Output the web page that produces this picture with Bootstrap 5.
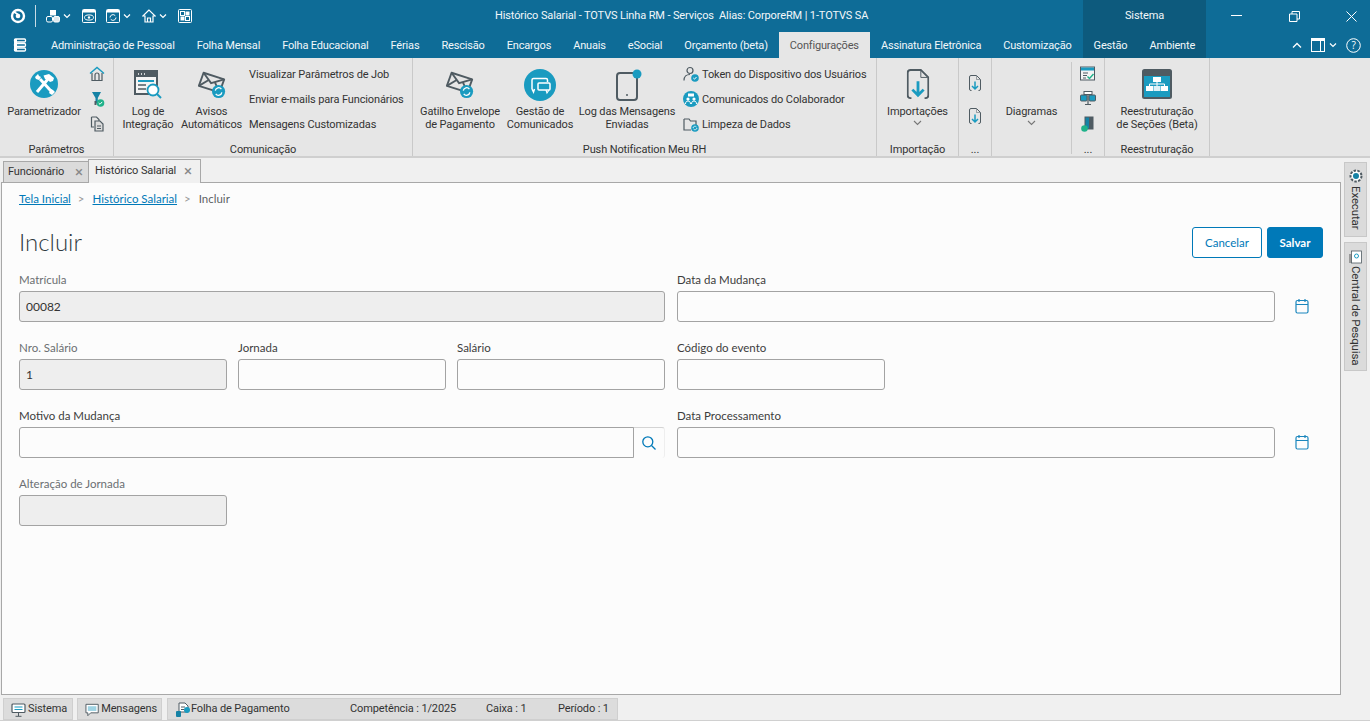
<!DOCTYPE html>
<html lang="pt-BR">
<head>
<meta charset="utf-8">
<title>Histórico Salarial</title>
<link href="https://cdn.jsdelivr.net/npm/bootstrap@5.3.0/dist/css/bootstrap.min.css" rel="stylesheet">
<style>
html,body{height:721px;overflow:hidden;margin:0;background:#f0f0f0}
body{font-family:Roboto,"Open Sans","Liberation Sans",sans-serif;font-size:11px;color:#333;width:1370px;letter-spacing:-.125px}
.shell{height:721px}
.headwrap{background:#0e6c97;height:58px;color:#f2f7fa}
.titlerow{height:32px}
.qat-in{width:300px;padding-left:10px;flex:none}
.qat-sep{width:1px;height:22px;background:#c8dbe5;margin:0 10px 0 9px}
.qat-ic{margin-right:7px}
.qat-ic2{margin-right:10px}
.qat-chev{margin-left:-4px;margin-right:11px}
.wintitle{width:783px;text-align:left;padding:1px 0 0 195px;white-space:nowrap;font-size:11px}
.sysblock{width:123px;height:32px;background:#0d5a7d;font-size:11px;padding-top:1px}
.winbtns{width:164px;padding:0 13px 0 25px}
.menurow{height:26px;font-size:11px;white-space:nowrap;letter-spacing:-.17px}
.menu-burger{width:40px;padding-left:13px}
.menu-it{padding:2px 11px 0;height:26px;display:flex;align-items:center}
.menu-act{background:#e6e6e6;color:#555}
.menu-dark{background:#0d5a7d;height:26px}
.menu-spacer{flex:1}
.menu-right{gap:9px;padding-right:9px}
.ribbon{height:100px;background:#e6e6e6;border-bottom:2px solid #cfcfcf}
.rgrp{border-right:1px solid #c9c9c9;height:98px;display:flex;flex-direction:column;flex:none}
.rbody{height:84px;display:flex;position:relative}
.rcap{height:14px;padding-top:1px;line-height:14px;text-align:center;font-size:11px;color:#333;white-space:nowrap}
.w1{width:114px}.w2{width:299px}.w3{width:464px}.w4{width:82px}.w5{width:33px}.w6{width:79px}.w7{width:33px}.w8{width:105px}
.rlg{display:flex;flex-direction:column;align-items:center;padding-top:11px;line-height:13px;text-align:center;white-space:nowrap;flex:none}
.rlg svg{margin-bottom:6px}
.rlg svg.tall{margin-bottom:4px}
.rlg svg.chv{margin:2px 0 0}
.rsm{display:flex;flex-direction:column;padding-top:4px;white-space:nowrap}
.rsm>div{height:25px;display:flex;align-items:center;gap:3px;padding-top:2px}
.rsm>div svg{margin-top:-4px}
.vline{border-left:1px solid #c9c9c9;height:92px;margin-top:4px;width:1px;flex:none}
.tabstrip{height:24px;background:#f0f0f0;padding:0 0 0 3px;align-items:flex-end}
.tb1{height:21px;width:86px;background:#dbdbdb;border:1px solid #a8a8a8;border-bottom:0;padding:1px 5px 0 4px}
.tb2{height:24px;width:113px;background:#f0f0f0;border:1px solid #a8a8a8;border-bottom:0;padding:0 8px 0 6px;margin-left:-1px;position:relative;z-index:2;margin-bottom:-1px}
.tabx{color:#888;font-size:15px;line-height:1}
.midrow{height:513px}
.panel{width:1340px;margin-left:1px;height:513px;background:#fcfcfc;border:1px solid #a8a8a8;padding:0 17px;font-family:Lato,"Open Sans",sans-serif;font-size:11.500px;color:#444;flex:none;letter-spacing:0}
.panel .breadcrumb{--bs-breadcrumb-divider:'>';margin:0;padding-top:8px;height:42px;font-size:11.500px;line-height:15px}
.panel .breadcrumb a{color:#0079b8}
.panel .breadcrumb-item+.breadcrumb-item{padding-left:7px}
.panel .breadcrumb-item+.breadcrumb-item::before{padding-right:8px;color:#999}
.pagehead{height:35px;align-items:center;margin-bottom:11px}
.pagetitle{font-size:24px;font-weight:300;color:#2f3a40;margin:-2px 0 0;line-height:32px}
.btn-cx{--bs-btn-font-size:11.500px;height:31px;border-radius:3px;padding:0}
.bc{width:70px;color:#0079b8;border-color:#0079b8;background:#fff;margin-right:5px}
.bs{width:56px;background:#0079b8;border-color:#0079b8;color:#fff;font-weight:700}
.frow{--bs-gutter-x:12px;height:68px}
.flab{display:block;height:20px;line-height:17px;margin:0;color:#3d3d3d;font-size:11.500px}
.flab.off{color:#6b6f72}
.frow .form-control{height:31px;border-radius:3px;border:1px solid #a3a3a3;background:#fcfcfc;font-size:12px;padding:0 6px;color:#333;box-shadow:none}
.frow .form-control[readonly]{background:#eeeeee}
.w208{width:208px;flex:none}
.calslot{width:48px;flex:none;display:flex;justify-content:center;padding:0 0 2px 5px}
.srchbtn{width:32px;border:0;border-top:1px solid #d4d4d4;border-right:1px solid #eee;background:#fcfcfc;padding:0;display:flex;align-items:center;justify-content:center;border-radius:0 3px 3px 0}
.frow .input-group .form-control{border-radius:3px 0 0 3px}
.sidebar{width:28px;padding-left:3px;margin-top:-20px;position:relative;z-index:3;gap:5px}
.stab{width:23px;background:#dbdbdb;border:1px solid #c8c8c8;writing-mode:vertical-rl;font-size:11.500px;display:flex;align-items:center;white-space:nowrap;color:#333;gap:2px;line-height:22px}
.st1{height:75px;padding-top:5px}.st2{height:129px;padding-top:7px}
.stab svg{flex:none}
.statusbar{height:26px;padding:3px 0 0 3px;gap:4px;background:#f0f0f0;border-bottom:1px solid #d0d0d0}
.sitem{background:#dcdcdc;border:1px solid #cfcfcf;height:22px;padding:1px 4px 0 7px;display:flex;align-items:center;gap:2px;white-space:nowrap;font-size:11px}
.s1{width:70px}.s2{width:85px}.s3{width:451px;margin-left:1px;gap:0}
</style>
</head>
<body>
<svg width="0" height="0" class="d-none">
<symbol id="env" viewBox="0 0 32 32"><g fill="none" stroke="#4f5b62" stroke-width="2"><path d="M7 4 29 11 24 25 2 18z" stroke-linejoin="round"/><path d="M7 4 15 15 29 11M2 18 12 12M24 25 19 14"/></g><circle cx="23" cy="24" r="7" fill="#1a9bc0"/><path d="M19.500 23a3.600 3.600 0 0 1 6.500-1.500M26.500 25a3.600 3.600 0 0 1-6.500 1.500" fill="none" stroke="#fff" stroke-width="1.400"/></symbol>
<symbol id="doc" viewBox="0 0 24 32"><path d="M5 31H4a3 3 0 0 1-3-3V4a3 3 0 0 1 3-3h11l8 8v19a3 3 0 0 1-3 3h-1" fill="none" stroke="#4f5b62" stroke-width="2"/><path d="M15 2v7h7" fill="none" stroke="#4f5b62" stroke-width="1"/><path d="M12 13v15M6 22l6 6 6-6" fill="none" stroke="#1a9bc0" stroke-width="3"/></symbol>
<symbol id="cal" viewBox="0 0 14 16"><path d="M1 4a1.500 1.500 0 0 1 1.500-1.500h9A1.500 1.500 0 0 1 13 4v9.500a1.500 1.500 0 0 1-1.500 1.500h-9A1.500 1.500 0 0 1 1 13.500zM1 6.500h12M4 1v3M10 1v3" fill="none" stroke="#1a86bd" stroke-width="1.200"/></symbol>
</svg>

<div class="shell d-flex flex-column">
  <div class="headwrap">
    <div class="titlerow d-flex align-items-center">
      <div class="qat-in d-flex align-items-center">
        <svg width="16" height="16" viewBox="0 0 16 16"><circle cx="8" cy="8" r="6" fill="none" stroke="#fff" stroke-width="2.400"/><circle cx="8" cy="8" r="2.300" fill="#fff"/><path d="M4 4l5 3" stroke="#fff" stroke-width="1.500"/></svg>
        <span class="qat-sep"></span>
        <svg class="qat-ic" width="14" height="14" viewBox="0 0 14 14"><rect x="4" y="1" width="6" height="5.500" fill="#fff"/><rect x=".5" y="7.500" width="6" height="5.500" rx="1.500" fill="none" stroke="#fff"/><rect x="7.500" y="7.500" width="6" height="5.500" rx="1.500" fill="#dfe9ee" stroke="#fff"/></svg>
        <svg class="qat-chev" width="8" height="6" viewBox="0 0 8 6"><path d="M1 1.500 4 4.500 7 1.500" fill="none" stroke="#fff" stroke-width="1.200"/></svg>
        <svg class="qat-ic2" width="14" height="14" viewBox="0 0 14 14"><rect x=".5" y=".5" width="13" height="13" rx="1" fill="none" stroke="#fff"/><rect x="1" y="1" width="12" height="2.500" fill="#fff"/><ellipse cx="7" cy="8.500" rx="4.500" ry="2.600" fill="none" stroke="#fff"/><circle cx="7" cy="8.500" r="1.200" fill="#fff"/></svg>
        <svg class="qat-ic" width="14" height="14" viewBox="0 0 14 14"><rect x=".5" y=".5" width="13" height="13" rx="1" fill="none" stroke="#fff"/><rect x="1" y="1" width="12" height="2.500" fill="#fff"/><path d="M4 8.500a3 3 0 0 1 5.300-1.800M10 8.500a3 3 0 0 1-5.300 1.800" fill="none" stroke="#fff"/></svg>
        <svg class="qat-chev" width="8" height="6" viewBox="0 0 8 6"><path d="M1 1.500 4 4.500 7 1.500" fill="none" stroke="#fff" stroke-width="1.200"/></svg>
        <svg class="qat-ic" width="14" height="14" viewBox="0 0 14 14"><path d="M7 1 .8 7H3v6h8V7h2.200zM5.500 13V9h3v4" fill="none" stroke="#fff" stroke-width="1.200"/></svg>
        <svg class="qat-chev" width="8" height="6" viewBox="0 0 8 6"><path d="M1 1.500 4 4.500 7 1.500" fill="none" stroke="#fff" stroke-width="1.200"/></svg>
        <svg class="qat-ic" width="14" height="14" viewBox="0 0 14 14"><rect x=".5" y=".5" width="13" height="13" rx="1" fill="none" stroke="#fff"/><rect x="2.500" y="2.500" width="4" height="4" fill="none" stroke="#fff"/><rect x="7.500" y="2.500" width="4" height="4" fill="#fff"/><rect x="2.500" y="7.500" width="4" height="4" fill="#fff"/><rect x="7.500" y="7.500" width="4" height="4" fill="none" stroke="#fff"/></svg>
      </div>
      <div class="wintitle">Histórico Salarial - TOTVS Linha RM - Serviços&nbsp; Alias: CorporeRM | 1-TOTVS SA</div>
      <div class="sysblock d-flex align-items-center justify-content-center flex-none">Sistema</div>
      <div class="winbtns d-flex align-items-center justify-content-between">
        <svg width="11" height="2" viewBox="0 0 11 2"><rect width="11" height="1" fill="#fff"/></svg>
        <svg width="11" height="11" viewBox="0 0 11 11"><path d="M.5 3h7.500v7.500H.5zM3 3V.5h7.500V8H8" fill="none" stroke="#fff"/></svg>
        <svg width="11" height="11" viewBox="0 0 11 11"><path d="M.5.500l10 10M10.500.500l-10 10" stroke="#fff"/></svg>
      </div>
    </div>
    <div class="menurow d-flex align-items-center">
      <div class="menu-burger d-flex"><svg width="14" height="14" viewBox="0 0 14 14"><rect x="1.500" y="1" width="11" height="3" rx="1" fill="none" stroke="#fff" stroke-width="1.300"/><rect x="1.500" y="5.500" width="11" height="3" rx="1" fill="none" stroke="#fff" stroke-width="1.300"/><rect x="1.500" y="10" width="11" height="3" rx="1" fill="none" stroke="#fff" stroke-width="1.300"/><rect x="1" y="1" width="3" height="12" fill="#fff"/></svg></div>
      <div class="menu-it">Administração de Pessoal</div>
      <div class="menu-it">Folha Mensal</div>
      <div class="menu-it">Folha Educacional</div>
      <div class="menu-it">Férias</div>
      <div class="menu-it">Rescisão</div>
      <div class="menu-it">Encargos</div>
      <div class="menu-it">Anuais</div>
      <div class="menu-it">eSocial</div>
      <div class="menu-it">Orçamento (beta)</div>
      <div class="menu-it menu-act">Configurações</div>
      <div class="menu-it">Assinatura Eletrônica</div>
      <div class="menu-it">Customização</div>
      <div class="menu-dark d-flex">
        <div class="menu-it">Gestão</div>
        <div class="menu-it">Ambiente</div>
      </div>
      <div class="menu-spacer"></div>
      <div class="menu-right d-flex align-items-center">
        <svg width="10" height="7" viewBox="0 0 10 7"><path d="M1 5.500 5 1.500 9 5.500" fill="none" stroke="#fff" stroke-width="1.300"/></svg>
        <span class="d-flex align-items-center gap-1"><svg width="14" height="14" viewBox="0 0 14 14"><rect x=".5" y=".5" width="13" height="13" fill="none" stroke="#fff"/><rect x="1" y="1" width="12" height="2" fill="#fff"/><path d="M9.500 1v12" stroke="#fff"/></svg><svg width="8" height="6" viewBox="0 0 8 6"><path d="M1 1.500 4 4.500 7 1.500" fill="none" stroke="#fff" stroke-width="1.200"/></svg></span>
        <svg width="15" height="15" viewBox="0 0 15 15"><circle cx="7.500" cy="7.500" r="6.800" fill="none" stroke="#fff"/><text x="7.500" y="11" text-anchor="middle" fill="#fff" font-size="10" font-family="Open Sans">?</text></svg>
      </div>
    </div>
  </div>

  <div class="ribbon d-flex">
    <div class="rgrp w1">
      <div class="rbody">
        <div class="rlg" style="width:88px">
          <svg width="30" height="30" viewBox="0 0 30 30"><circle cx="15" cy="15" r="14" fill="#1a9bc0"/><path d="M19 10 8 23" stroke="#fff" stroke-width="3"/><path d="M14.500 6.500 20 5l5 4-1 3-3 1-2-2-3-1z" fill="#fff"/><path d="M11 10 22 22" stroke="#fff" stroke-width="3"/><path d="M6 8l3-3 1 2 2 1-2 3-3-1zM20 24l3 2 3-3-2-2-2-1z" fill="#fff"/></svg>
          <span>Parametrizador</span>
        </div>
        <div class="rsm" style="padding-left:1px">
          <div><svg width="16" height="16" viewBox="0 0 16 16"><path d="M1 7.500 8 1.500l7 6" fill="none" stroke="#1a9bc0" stroke-width="1.400"/><path d="M3 7v7.500h10V7M6 14.500V9a2 2 0 0 1 4 0v5.500" fill="none" stroke="#4f5b62" stroke-width="1.200"/></svg></div>
          <div><svg width="16" height="16" viewBox="0 0 16 16"><path d="M3 1h9L8.800 7v6L6.500 12V7z" fill="#1582a5"/><path d="M6.500 10v4" stroke="#4f5b62" stroke-width="2"/><circle cx="11.500" cy="12" r="3.800" fill="#1fb28a"/><path d="M9.700 12l1.300 1.300 2.200-2.400" fill="none" stroke="#fff"/></svg></div>
          <div><svg width="16" height="16" viewBox="0 0 16 16"><path d="M2.500 1h5l2.500 2.500V5M2.500 1v10H5" fill="none" stroke="#4f5b62" stroke-width="1.200"/><path d="M6 5h5l3 3v7H6z" fill="#dcdcdc" stroke="#4f5b62" stroke-width="1.200"/><path d="M8 10h4M8 12.500h4" stroke="#4f5b62"/></svg></div>
        </div>
      </div>
      <div class="rcap">Parâmetros</div>
    </div>
    <div class="rgrp w2">
      <div class="rbody">
        <div class="rlg" style="width:62px;margin-left:3px">
          <svg width="32" height="30" viewBox="0 0 32 30"><rect x="3" y="2" width="22" height="23" fill="#f4f4f4" stroke="#4f5b62" stroke-width="2"/><rect x="3" y="2" width="22" height="6" fill="#4f5b62"/><path d="M6 5h1M9 5h1M12 5h1" stroke="#fff" stroke-width="1.500"/><path d="M6 12h16" stroke="#1a9bc0" stroke-width="2"/><path d="M6 16h8M6 20h8" stroke="#4f5b62" stroke-width="1.500"/><circle cx="21" cy="21" r="5.500" fill="#fff" stroke="#1a9bc0" stroke-width="1.800"/><path d="M25 25l4 4" stroke="#1a9bc0" stroke-width="2"/></svg>
          <span>Log de<br>Integração</span>
        </div>
        <div class="rlg" style="width:65px">
          <svg width="32" height="30" viewBox="0 0 32 30"><use href="#env"/></svg>
          <span>Avisos<br>Automáticos</span>
        </div>
        <div class="rsm" style="padding-left:5px">
          <div>Visualizar Parâmetros de Job</div>
          <div>Enviar e-mails para Funcionários</div>
          <div>Mensagens Customizadas</div>
        </div>
      </div>
      <div class="rcap">Comunicação</div>
    </div>
    <div class="rgrp w3">
      <div class="rbody">
        <div class="rlg" style="width:86px;margin-left:4px">
          <svg width="32" height="30" viewBox="0 0 32 30"><use href="#env"/></svg>
          <span>Gatilho Envelope<br>de Pagamento</span>
        </div>
        <div class="rlg" style="width:74px">
          <svg class="tall" width="32" height="32" viewBox="0 0 32 32"><circle cx="16" cy="16" r="16" fill="#1a9bc0"/><path d="M8 20v-9a1.500 1.500 0 0 1 1.500-1.500H22a1.500 1.500 0 0 1 1.500 1.500v2M8 20l1.500 3 1-3" fill="none" stroke="#fff" stroke-width="1.500"/><rect x="14" y="14" width="12" height="7" rx="1" fill="#1a9bc0" stroke="#fff" stroke-width="1.500"/><path d="M22 21l1 3 2-3" fill="none" stroke="#fff" stroke-width="1.200"/></svg>
          <span>Gestão de<br>Comunicados</span>
        </div>
        <div class="rlg" style="width:100px">
          <svg class="tall" width="32" height="32" viewBox="0 0 32 32"><rect x="6" y="4" width="20" height="27" rx="3" fill="none" stroke="#4f5b62" stroke-width="2"/><circle cx="16" cy="26" r="1" fill="#4f5b62"/><circle cx="26" cy="5" r="4.500" fill="#1a9bc0"/></svg>
          <span>Log das Mensagens<br>Enviadas</span>
        </div>
        <div class="rsm" style="padding-left:6px">
          <div><svg width="16" height="16" viewBox="0 0 16 16"><circle cx="7" cy="4.500" r="3" fill="none" stroke="#4f5b62" stroke-width="1.200"/><path d="M1 14.500c0-4 2.500-6 6-6" fill="none" stroke="#4f5b62" stroke-width="1.200"/><circle cx="12" cy="12" r="3.800" fill="#1a9bc0"/><path d="M10.300 12l1.200 1.200 2-2.200" fill="none" stroke="#fff"/></svg>Token do Dispositivo dos Usuários</div>
          <div><svg width="16" height="16" viewBox="0 0 16 16"><circle cx="8" cy="8" r="8" fill="#1a9bc0"/><circle cx="5" cy="8" r="1.600" fill="#fff"/><circle cx="11" cy="8" r="1.600" fill="#fff"/><path d="M2.500 13c0-2 1-3 2.500-3s2.500 1 2.500 3M8.500 13c0-2 1-3 2.500-3s2.500 1 2.500 3" fill="none" stroke="#fff"/><rect x="5" y="2.500" width="6" height="3" fill="#fff"/></svg>Comunicados do Colaborador</div>
          <div><svg width="16" height="16" viewBox="0 0 16 16"><path d="M1 3h5l1.500 2H13v5M1 3v11h7" fill="none" stroke="#4f5b62" stroke-width="1.200"/><circle cx="12" cy="12" r="3.800" fill="#1a9bc0"/><path d="M10 12a2 2 0 0 1 3.500-1M14 12a2 2 0 0 1-3.500 1" fill="none" stroke="#fff" stroke-width=".8"/></svg>Limpeza de Dados</div>
        </div>
      </div>
      <div class="rcap">Push Notification Meu RH</div>
    </div>
    <div class="rgrp w4">
      <div class="rbody">
        <div class="rlg w-100">
          <svg width="24" height="30" viewBox="0 0 24 32"><use href="#doc"/></svg>
          <span>Importações</span>
          <svg class="chv" width="9" height="6" viewBox="0 0 9 6"><path d="M1 1l3.500 3.500L8 1" fill="none" stroke="#777" stroke-width="1.100"/></svg>
        </div>
      </div>
      <div class="rcap">Importação</div>
    </div>
    <div class="rgrp w5">
      <div class="rbody justify-content-center">
        <div class="d-flex flex-column align-items-center" style="padding-top:17px;gap:17px">
          <svg width="12" height="16" viewBox="0 0 24 32"><use href="#doc"/></svg>
          <svg width="12" height="16" viewBox="0 0 24 32"><use href="#doc"/></svg>
        </div>
      </div>
      <div class="rcap">...</div>
    </div>
    <div class="rgrp w6" style="border-right:0">
      <div class="rbody">
        <div class="rlg w-100" style="padding-top:47px">
          <span>Diagramas</span>
          <svg class="chv" width="9" height="6" viewBox="0 0 9 6"><path d="M1 1l3.500 3.500L8 1" fill="none" stroke="#777" stroke-width="1.100"/></svg>
        </div>
      </div>
    </div>
    <div class="vline"></div>
    <div class="rgrp w7">
      <div class="rbody justify-content-center">
        <div class="rsm">
          <div><svg width="15" height="15" viewBox="0 0 15 15"><rect x=".5" y="1" width="14" height="13" fill="#f4f4f4" stroke="#4f5b62"/><rect x="1" y="1.500" width="13" height="3" fill="#1a9bc0"/><path d="M3 7h5M3 9.500h4M3 12h3" stroke="#4f5b62"/><path d="M7.500 10.500l2 2 4-4.500" fill="none" stroke="#1fb28a" stroke-width="1.400"/></svg></div>
          <div><svg width="16" height="15" viewBox="0 0 16 15"><rect x="4" y=".5" width="8" height="3" fill="#fff" stroke="#4f5b62"/><rect x=".5" y="4" width="6.500" height="6" rx="1" fill="#1a9bc0" stroke="#4f5b62"/><rect x="9" y="4" width="6.500" height="6" rx="1" fill="#1a9bc0" stroke="#4f5b62"/><path d="M8 4v9M5 13.500h6" stroke="#4f5b62" stroke-width="1.200"/></svg></div>
          <div><svg width="15" height="16" viewBox="0 0 15 16"><rect x="5" y="1" width="8" height="12" fill="#1582a5" stroke="#4f5b62"/><rect x="9" y="1" width="4" height="12" fill="#4f5b62"/><circle cx="4.500" cy="12.500" r="3.300" fill="#1fb28a"/></svg></div>
        </div>
      </div>
      <div class="rcap">...</div>
    </div>
    <div class="rgrp w8">
      <div class="rbody">
        <div class="rlg w-100">
          <svg width="30" height="30" viewBox="0 0 30 30"><rect x="1" y="1" width="28" height="28" rx="1.500" fill="#1a9bc0" stroke="#4f5b62" stroke-width="2"/><rect x="2" y="2" width="26" height="5" fill="#4f5b62"/><rect x="11" y="8" width="8" height="5" fill="#fff"/><rect x="4" y="17" width="7" height="5" fill="#fff"/><rect x="19" y="17" width="7" height="5" fill="#fff"/><rect x="11.500" y="17" width="7" height="5" fill="#dff1f7"/><path d="M15 13v4M7.500 17v-2h15v2" fill="none" stroke="#fff"/></svg>
          <span>Reestruturação<br>de Seções (Beta)</span>
        </div>
      </div>
      <div class="rcap">Reestruturação</div>
    </div>
  </div>

  <div class="tabstrip d-flex">
    <div class="tb1 d-flex align-items-center justify-content-between"><span>Funcionário</span><span class="tabx">×</span></div>
    <div class="tb2 d-flex align-items-center justify-content-between"><span>Histórico Salarial</span><span class="tabx">×</span></div>
  </div>

  <div class="midrow d-flex">
    <main class="panel">
      <nav aria-label="breadcrumb">
        <ol class="breadcrumb">
          <li class="breadcrumb-item"><a href="#">Tela Inicial</a></li>
          <li class="breadcrumb-item"><a href="#">Histórico Salarial</a></li>
          <li class="breadcrumb-item active" aria-current="page">Incluir</li>
        </ol>
      </nav>
      <div class="pagehead d-flex justify-content-between">
        <h1 class="pagetitle">Incluir</h1>
        <div class="d-flex">
          <button type="button" class="btn btn-cx bc">Cancelar</button>
          <button type="button" class="btn btn-cx bs">Salvar</button>
        </div>
      </div>
      <div class="row frow">
        <div class="col-6"><label class="flab off">Matrícula</label><input class="form-control" readonly value="00082"></div>
        <div class="col-6"><label class="flab">Data da Mudança</label><div class="d-flex align-items-center"><input class="form-control"><span class="calslot"><svg width="14" height="16"><use href="#cal"/></svg></span></div></div>
      </div>
      <div class="row frow">
        <div class="col-6 d-flex justify-content-between">
          <div class="w208"><label class="flab off">Nro. Salário</label><input class="form-control" readonly value="1"></div>
          <div class="w208"><label class="flab">Jornada</label><input class="form-control"></div>
          <div class="w208"><label class="flab">Salário</label><input class="form-control"></div>
        </div>
        <div class="col-6"><div class="w208"><label class="flab">Código do evento</label><input class="form-control"></div></div>
      </div>
      <div class="row frow">
        <div class="col-6"><label class="flab">Motivo da Mudança</label><div class="input-group"><input class="form-control"><button type="button" class="srchbtn" aria-label="Buscar"><svg width="16" height="16" viewBox="0 0 16 16"><circle cx="6.800" cy="6.800" r="5" fill="none" stroke="#0079b8" stroke-width="1.300"/><path d="M10.500 10.500l4 4" stroke="#0079b8" stroke-width="1.300"/></svg></button></div></div>
        <div class="col-6"><label class="flab">Data Processamento</label><div class="d-flex align-items-center"><input class="form-control"><span class="calslot"><svg width="14" height="16"><use href="#cal"/></svg></span></div></div>
      </div>
      <div class="row frow">
        <div class="col-6"><div class="w208"><label class="flab off">Alteração de Jornada</label><input class="form-control" readonly></div></div>
      </div>
    </main>
    <aside class="sidebar d-flex flex-column">
      <div class="stab st1"><svg width="16" height="16" viewBox="0 0 16 16"><circle cx="8" cy="8" r="5.500" fill="#fff" stroke="#4f5b62" stroke-width="2" stroke-dasharray="2.500 1.300"/><circle cx="8" cy="8" r="3" fill="#1582a5"/></svg>Executar</div>
      <div class="stab st2"><svg width="14" height="14" viewBox="0 0 14 14"><rect x="0" y="4" width="3" height="9" fill="#9a9a9a"/><rect x="2.500" y="1" width="10" height="12" fill="#fff" stroke="#4f5b62" stroke-width=".8"/><circle cx="7.500" cy="6" r="2" fill="none" stroke="#1a9bc0"/></svg>Central de Pesquisa</div>
    </aside>
  </div>

  <footer class="statusbar d-flex">
    <div class="sitem s1"><svg width="15" height="14" viewBox="0 0 15 14"><rect x="1" y="1" width="13" height="8.500" rx="1" fill="#fff" stroke="#4f5b62" stroke-width="1.200"/><path d="M3.500 4h8M3.500 6.500h8" stroke="#1a9bc0"/><path d="M7.500 10v3M4.500 13.300h6" stroke="#4f5b62"/></svg>Sistema</div>
    <div class="sitem s2"><svg width="15" height="14" viewBox="0 0 15 14"><path d="M1 1h13v9H6l-3 3v-3H1z" fill="#fff" stroke="#4f5b62"/><rect x="3" y="3" width="9" height="5" fill="#9fd3e3"/></svg>Mensagens</div>
    <div class="sitem s3"><svg width="16" height="16" viewBox="0 0 16 16"><path d="M4 1h6l3 3v6H4z" fill="#fff" stroke="#4f5b62"/><path d="M6 5h4M6 7.500h3" stroke="#4f5b62"/><rect x="1" y="9" width="5" height="6" rx="1" fill="#1582a5"/><circle cx="12" cy="8" r="3" fill="#1a9bc0"/></svg><span style="width:159px">Folha de Pagamento</span><span style="width:136px">Competência : 1/2025</span><span style="width:72px">Caixa : 1</span><span>Período : 1</span></div>
  </footer>
</div>
</body>
</html>
